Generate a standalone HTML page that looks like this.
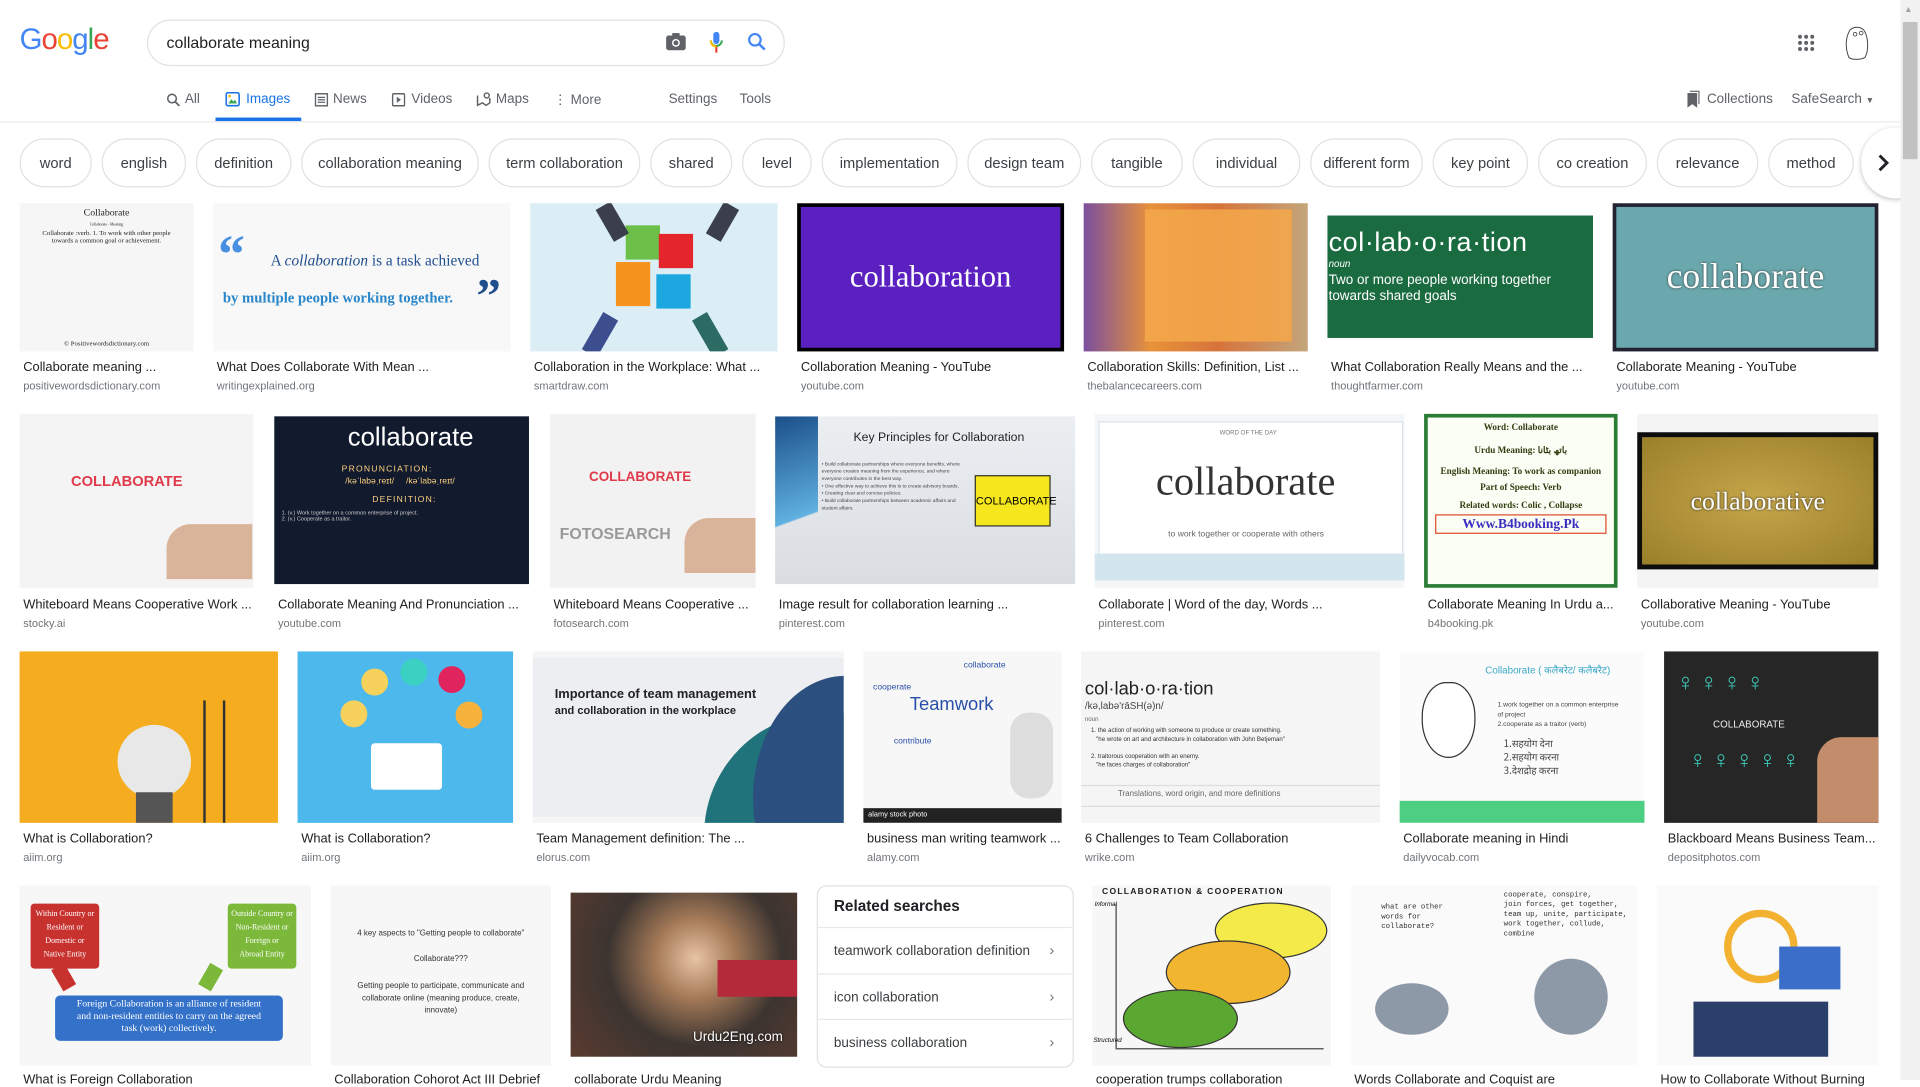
<!DOCTYPE html>
<html><head><meta charset="utf-8">
<style>
html,body{margin:0;padding:0;width:1920px;height:1080px;overflow:hidden;background:#fff;font-family:"Liberation Sans",Arial,sans-serif;}
#w{position:absolute;left:0;top:0;width:1568px;height:882px;transform:scale(1.22449);transform-origin:0 0;}
.a{position:absolute;}
.chip{position:absolute;top:113px;height:38px;border:1px solid #dfe1e5;border-radius:20px;font-size:12px;color:#3c4043;line-height:38px;text-align:center;box-sizing:content-box;}
.tab{position:absolute;top:75px;font-size:11px;color:#5f6368;}
.im{position:absolute;overflow:hidden;}
.cap{position:absolute;font-size:10.5px;color:#202124;white-space:nowrap;}
.src{position:absolute;font-size:9px;color:#70757a;white-space:nowrap;}
.ser{font-family:"Liberation Serif",serif;}
</style></head><body><div id="w">
<div class="a" style="left:16px;top:19px;font-size:24px;letter-spacing:-0.8px;font-family:'Liberation Sans',sans-serif"><span style="color:#4285f4">G</span><span style="color:#ea4335">o</span><span style="color:#fbbc05">o</span><span style="color:#4285f4">g</span><span style="color:#34a853">l</span><span style="color:#ea4335">e</span></div>
<div class="a" style="left:120px;top:16px;width:519px;height:36px;border:1px solid #dfe1e5;border-radius:20px;"></div>
<div class="a" style="left:136px;top:27px;font-size:13px;color:#222">collaborate meaning</div>
<svg class="a" style="left:543px;top:26px" width="18" height="16" viewBox="0 0 18 16"><rect x="1" y="3" width="16" height="12" rx="2" fill="#5f6368"/><rect x="6" y="1" width="6" height="3" fill="#5f6368"/><circle cx="9" cy="9" r="3.2" fill="#fff"/><circle cx="9" cy="9" r="2" fill="#5f6368"/></svg>
<svg class="a" style="left:579px;top:25px" width="12" height="19" viewBox="0 0 12 19"><rect x="3.5" y="1" width="5" height="10" rx="2.5" fill="#4285f4"/><path d="M1.5 8 a4.5 4.5 0 0 0 9 0" stroke="#34a853" stroke-width="1.6" fill="none"/><path d="M6 13 v5" stroke="#ea4335" stroke-width="1.8"/><path d="M6 13 a4.5 4.5 0 0 1 -4.5 -5" stroke="#fbbc05" stroke-width="1.6" fill="none"/></svg>
<svg class="a" style="left:610px;top:26px" width="16" height="16" viewBox="0 0 16 16"><circle cx="6.5" cy="6.5" r="4.7" stroke="#4285f4" stroke-width="1.8" fill="none"/><path d="M10 10 L14.5 14.5" stroke="#4285f4" stroke-width="2"/></svg>
<svg class="a" style="left:1468px;top:28px" width="14" height="14" viewBox="0 0 14 14" fill="#5f6368"><circle cx="2" cy="2" r="1.6"/><circle cx="7" cy="2" r="1.6"/><circle cx="12" cy="2" r="1.6"/><circle cx="2" cy="7" r="1.6"/><circle cx="7" cy="7" r="1.6"/><circle cx="12" cy="7" r="1.6"/><circle cx="2" cy="12" r="1.6"/><circle cx="7" cy="12" r="1.6"/><circle cx="12" cy="12" r="1.6"/></svg>
<svg class="a" style="left:1504px;top:20px" width="24" height="30" viewBox="0 0 24 30"><path d="M6 6 C8 1 17 1 19 6 C22 12 22 22 19 27 C15 29 9 29 6 27 C3 20 3 12 6 6Z" fill="#fff" stroke="#444" stroke-width="0.8"/><circle cx="11" cy="8" r="1.5" fill="none" stroke="#444" stroke-width="0.7"/><circle cx="16" cy="7" r="1.5" fill="none" stroke="#444" stroke-width="0.7"/></svg>
<svg class="a" style="left:136px;top:76px" width="11" height="11" viewBox="0 0 11 11"><circle cx="4.5" cy="4.5" r="3.5" stroke="#5f6368" stroke-width="1.3" fill="none"/><path d="M7 7 L10.5 10.5" stroke="#5f6368" stroke-width="1.4"/></svg>
<div class="tab" style="left:151px">All</div>
<svg class="a" style="left:184px;top:75px" width="12" height="12" viewBox="0 0 12 12"><rect x="0.7" y="0.7" width="10.6" height="10.6" rx="1.5" stroke="#1a73e8" stroke-width="1.3" fill="none"/><path d="M2.5 9.5 L5 6 L6.5 8 L8 6.5 L9.5 9.5Z" fill="#34a853"/><rect x="2.5" y="2.5" width="2" height="2" fill="#fbbc05"/></svg>
<div class="tab" style="left:201px;color:#1a73e8">Images</div>
<div class="a" style="left:176px;top:96px;width:70px;height:3px;background:#1a73e8"></div>
<svg class="a" style="left:257px;top:76px" width="11" height="11" viewBox="0 0 11 11"><rect x="0.6" y="0.6" width="9.8" height="9.8" stroke="#5f6368" stroke-width="1.2" fill="none"/><path d="M2.5 3.5h6M2.5 5.5h6M2.5 7.5h6" stroke="#5f6368" stroke-width="1"/></svg>
<div class="tab" style="left:272px">News</div>
<svg class="a" style="left:320px;top:76px" width="11" height="11" viewBox="0 0 11 11"><rect x="0.6" y="0.6" width="9.8" height="9.8" rx="1" stroke="#5f6368" stroke-width="1.2" fill="none"/><path d="M4 3 L7.5 5.5 L4 8Z" fill="#5f6368"/></svg>
<div class="tab" style="left:336px">Videos</div>
<svg class="a" style="left:389px;top:75px" width="12" height="12" viewBox="0 0 12 12"><path d="M1 3 V11 L5 9 L8 11 L11 9 V5" stroke="#5f6368" stroke-width="1.2" fill="none"/><circle cx="8.5" cy="3" r="2" stroke="#5f6368" stroke-width="1.2" fill="none"/></svg>
<div class="tab" style="left:405px">Maps</div>
<div class="tab" style="left:452px">&#8942; More</div>
<div class="tab" style="left:546px">Settings</div>
<div class="tab" style="left:604px">Tools</div>
<svg class="a" style="left:1378px;top:74px" width="10" height="14" viewBox="0 0 10 14"><path d="M2 0 H10 V11 H9 V1 H2Z M0 2 H8 V14 L4 11 L0 14Z" fill="#5f6368"/></svg>
<div class="tab" style="left:1394px">Collections</div>
<div class="tab" style="left:1463px">SafeSearch <span style="font-size:7px">&#9660;</span></div>
<div class="a" style="left:0;top:99px;width:1552px;height:1px;background:#ebebeb"></div>
<div class="a" style="left:1552px;top:0;width:16px;height:882px;background:#f1f1f1"></div>
<div class="a" style="left:1554px;top:18px;width:12px;height:112px;background:#c1c1c1"></div>
<div class="a" style="left:1555px;top:5px;font-size:7px;color:#a3a3a3">&#9650;</div>
<div class="chip" style="left:16px;width:57px">word</div>
<div class="chip" style="left:83px;width:67px">english</div>
<div class="chip" style="left:160px;width:76px">definition</div>
<div class="chip" style="left:246px;width:143px">collaboration meaning</div>
<div class="chip" style="left:399px;width:122px">term collaboration</div>
<div class="chip" style="left:531px;width:65px">shared</div>
<div class="chip" style="left:606px;width:55px">level</div>
<div class="chip" style="left:671px;width:109px">implementation</div>
<div class="chip" style="left:790px;width:91px">design team</div>
<div class="chip" style="left:891px;width:73px">tangible</div>
<div class="chip" style="left:974px;width:86px">individual</div>
<div class="chip" style="left:1070px;width:90px">different form</div>
<div class="chip" style="left:1170px;width:76px">key point</div>
<div class="chip" style="left:1256px;width:87px">co creation</div>
<div class="chip" style="left:1353px;width:81px">relevance</div>
<div class="chip" style="left:1444px;width:68px">method</div>
<div class="a" style="left:1520px;top:104px;width:56px;height:58px;border-radius:29px;background:#fff;box-shadow:0 1px 4px rgba(0,0,0,.25)"></div>
<svg class="a" style="left:1533px;top:125px" width="10" height="16" viewBox="0 0 10 16"><path d="M2 2 L8 8 L2 14" stroke="#202124" stroke-width="2.4" fill="none"/></svg>
<div class="a" style="left:1552px;top:100px;width:16px;height:70px;background:#f1f1f1"></div>
<div class="a" style="left:1554px;top:100px;width:12px;height:30px;background:#c1c1c1"></div>

<div class="im ser" style="left:16px;top:166px;width:142px;height:121px;background:#f6f6f6;text-align:center;color:#222">
 <div style="font-size:8px;margin-top:3px">Collaborate</div><div style="font-size:3px;margin-top:3px">Collaborate - Meaning</div>
 <div style="font-size:5.5px;margin-top:3px;line-height:6px">Collaborate :verb. 1. To work with other people<br>towards a common goal or achievement.</div>
 <div style="font-size:5.5px;position:absolute;bottom:3px;width:100%">© Positivewordsdictionary.com</div></div>
<div class="im ser" style="left:174px;top:166px;width:243px;height:121px;background:#f8f8f8">
 <div style="position:absolute;left:4px;top:16px;font-size:44px;color:#4a90e2;font-weight:bold">&#8220;</div>
 <div style="position:absolute;left:47px;top:40px;font-size:12.5px;color:#1f4e8c">A <i>collaboration</i> is a task achieved</div>
 <div style="position:absolute;left:8px;top:70px;font-size:12px;color:#2a86c8;font-weight:bold">by multiple people working together.</div>
 <div style="position:absolute;left:215px;top:52px;font-size:40px;color:#1f4e8c;font-weight:bold">&#8221;</div></div>
<div class="im" style="left:433px;top:166px;width:202px;height:121px;background:#dbeef6">
 <div class="a" style="left:78px;top:18px;width:28px;height:28px;background:#6cc04a"></div><div class="a" style="left:105px;top:25px;width:28px;height:28px;background:#e4262c"></div>
 <div class="a" style="left:70px;top:48px;width:28px;height:36px;background:#f6921e"></div><div class="a" style="left:103px;top:58px;width:28px;height:28px;background:#1ca7e0"></div>
 <div class="a" style="left:60px;top:0;width:14px;height:30px;background:#3a3f4b;transform:rotate(-30deg)"></div><div class="a" style="left:150px;top:0;width:14px;height:30px;background:#3a3f4b;transform:rotate(30deg)"></div>
 <div class="a" style="left:50px;top:90px;width:14px;height:35px;background:#3d4e8f;transform:rotate(30deg)"></div><div class="a" style="left:140px;top:90px;width:14px;height:35px;background:#2b6b64;transform:rotate(-30deg)"></div></div>
<div class="im" style="left:651px;top:166px;width:218px;height:121px;background:#000"><div class="a ser" style="left:3px;top:3px;width:212px;height:115px;background:#5a20c0;color:#fff;font-size:25px;text-align:center;line-height:115px">collaboration</div></div>
<div class="im" style="left:885px;top:166px;width:183px;height:121px;background:linear-gradient(90deg,#7b4f9e 0,#e8923a 30%,#d6733b 60%,#c3a57b 100%)"><div class="a" style="left:50px;top:5px;width:120px;height:108px;background:#f3a64a;opacity:.9"></div></div>
<div class="im" style="left:1084px;top:166px;width:217px;height:121px;background:#fff"><div class="a" style="left:0;top:10px;width:217px;height:100px;background:#1b6b40;color:#fff">
 <div style="font-size:22px;margin:9px 0 0 1px;letter-spacing:.5px">col·lab·o·ra·tion</div><div style="font-size:8px;font-style:italic;margin-left:1px">noun</div>
 <div style="font-size:11px;margin:3px 0 0 1px;line-height:13px">Two or more people working together<br>towards shared goals</div></div></div>
<div class="im" style="left:1317px;top:166px;width:217px;height:121px;background:#223"><div class="a ser" style="left:3px;top:3px;width:211px;height:115px;background:#6aa8ad;color:#fff;font-size:29px;text-align:center;line-height:115px;text-shadow:0 0 2px #333">collaborate</div></div>

<div class="cap" style="left:19px;top:294px">Collaborate meaning ...</div><div class="src" style="left:19px;top:310px">positivewordsdictionary.com</div>
<div class="cap" style="left:177px;top:294px">What Does Collaborate With Mean ...</div><div class="src" style="left:177px;top:310px">writingexplained.org</div>
<div class="cap" style="left:436px;top:294px">Collaboration in the Workplace: What ...</div><div class="src" style="left:436px;top:310px">smartdraw.com</div>
<div class="cap" style="left:654px;top:294px">Collaboration Meaning - YouTube</div><div class="src" style="left:654px;top:310px">youtube.com</div>
<div class="cap" style="left:888px;top:294px">Collaboration Skills: Definition, List ...</div><div class="src" style="left:888px;top:310px">thebalancecareers.com</div>
<div class="cap" style="left:1087px;top:294px">What Collaboration Really Means and the ...</div><div class="src" style="left:1087px;top:310px">thoughtfarmer.com</div>
<div class="cap" style="left:1320px;top:294px">Collaborate Meaning - YouTube</div><div class="src" style="left:1320px;top:310px">youtube.com</div>

<div class="im" style="left:16px;top:338px;width:191px;height:142px;background:#f4f4f4"><div class="a" style="left:42px;top:48px;font-size:12px;color:#e03a4a;font-weight:bold">COLLABORATE</div><div class="a" style="left:120px;top:90px;width:70px;height:45px;background:#d9b49a;border-radius:20px 0 0 0"></div></div>
<div class="im" style="left:224px;top:340px;width:208px;height:137px;background:#121a2e;color:#fff">
 <div class="a" style="left:60px;top:6px;font-size:21px">collaborate</div><div class="a" style="left:55px;top:40px;font-size:7px;letter-spacing:1px;color:#ffd27f">PRONUNCIATION:</div>
 <div class="a" style="left:58px;top:50px;font-size:7px;color:#ffd27f">/kəˈlabəˌreɪt/ &nbsp;&nbsp;&nbsp;&nbsp;/kəˈlabəˌreɪt/</div><div class="a" style="left:80px;top:65px;font-size:7px;letter-spacing:1px;color:#ffd27f">DEFINITION:</div>
 <div class="a" style="left:6px;top:76px;font-size:4.5px;color:#ccc;width:200px">1. (v.) Work together on a common enterprise of project.<br>2. (v.) Cooperate as a traitor.</div></div>
<div class="im" style="left:449px;top:338px;width:168px;height:142px;background:#f2f2f2"><div class="a" style="left:32px;top:46px;font-size:11px;color:#e03a4a;font-weight:bold">COLLABORATE</div><div class="a" style="left:8px;top:90px;font-size:13px;color:#999;font-weight:bold">FOTOSEARCH</div><div class="a" style="left:110px;top:85px;width:60px;height:45px;background:#d9b49a;border-radius:20px 0 0 0"></div></div>
<div class="im" style="left:633px;top:340px;width:245px;height:137px;background:linear-gradient(#eceff2,#d9dde2)">
 <div class="a" style="left:0;top:0;width:35px;height:137px;background:linear-gradient(160deg,#1b4f8a,#5fb0e0 60%,transparent 61%)"></div>
 <div class="a" style="left:64px;top:12px;font-size:10px;color:#222">Key Principles for Collaboration</div>
 <div class="a" style="left:38px;top:36px;font-size:4px;color:#444;width:120px;line-height:6px">• Build collaborate partnerships where everyone benefits, where everyone creates meaning from the experience, and where everyone contributes in the best way.<br>• One effective way to achieve this is to create advisory boards.<br>• Creating clear and concise policies.<br>• Build collaborate partnerships between academic affairs and student affairs.</div>
 <div class="a" style="left:163px;top:48px;width:60px;height:40px;background:#f5e61e;border:1px solid #333;font-size:9px;text-align:center;line-height:40px">COLLABORATE</div></div>
<div class="im" style="left:894px;top:338px;width:253px;height:142px;background:#f4f6f7"><div class="a" style="left:3px;top:6px;width:247px;height:108px;background:#fff;border:1px solid #d7e3ea"></div><div class="a" style="left:0;top:114px;width:253px;height:22px;background:#d3e6ee"></div>
 <div class="a" style="left:102px;top:13px;font-size:5px;color:#777">WORD OF THE DAY</div><div class="a ser" style="left:50px;top:38px;font-size:33px;color:#333">collaborate</div><div class="a" style="left:60px;top:95px;font-size:7px;color:#666">to work together or cooperate with others</div></div>
<div class="im ser" style="left:1163px;top:338px;width:158px;height:142px;background:#2b7d36"><div class="a" style="left:3px;top:3px;width:152px;height:136px;background:#fafef5;text-align:center;font-size:7.5px;font-weight:bold;color:#2f3e10;line-height:11px">
 <div style="margin-top:2px">Word: Collaborate</div><div style="margin-top:8px">Urdu Meaning: باتھ بٹانا</div><div style="margin-top:6px">English Meaning: To work as companion</div><div style="margin-top:2px">Part of Speech: Verb</div><div style="margin-top:4px">Related words: Colic , Collapse</div>
 <div style="margin:2px 6px 0;border:1.5px solid #e04b2a;color:#3a2ec0;font-size:11px;line-height:14px">Www.B4booking.Pk</div></div></div>
<div class="im" style="left:1337px;top:338px;width:197px;height:142px;background:#f4f4f4"><div class="a" style="left:0;top:15px;width:197px;height:112px;background:#0d0d0d"></div><div class="a ser" style="left:4px;top:19px;width:189px;height:104px;background:radial-gradient(#c6a64a,#9a7f2a);color:#fff;font-size:21px;text-align:center;line-height:104px;text-shadow:0 0 2px #222">collaborative</div></div>

<div class="cap" style="left:19px;top:488px">Whiteboard Means Cooperative Work ...</div><div class="src" style="left:19px;top:504px">stocky.ai</div>
<div class="cap" style="left:227px;top:488px">Collaborate Meaning And Pronunciation ...</div><div class="src" style="left:227px;top:504px">youtube.com</div>
<div class="cap" style="left:452px;top:488px">Whiteboard Means Cooperative ...</div><div class="src" style="left:452px;top:504px">fotosearch.com</div>
<div class="cap" style="left:636px;top:488px">Image result for collaboration learning ...</div><div class="src" style="left:636px;top:504px">pinterest.com</div>
<div class="cap" style="left:897px;top:488px">Collaborate | Word of the day, Words ...</div><div class="src" style="left:897px;top:504px">pinterest.com</div>
<div class="cap" style="left:1166px;top:488px">Collaborate Meaning In Urdu a...</div><div class="src" style="left:1166px;top:504px">b4booking.pk</div>
<div class="cap" style="left:1340px;top:488px">Collaborative Meaning - YouTube</div><div class="src" style="left:1340px;top:504px">youtube.com</div>

<div class="im" style="left:16px;top:532px;width:211px;height:140px;background:#f5ad1f"><div class="a" style="left:80px;top:60px;width:60px;height:60px;border-radius:50%;background:#e8e8e8"></div><div class="a" style="left:95px;top:115px;width:30px;height:25px;background:#555"></div><div class="a" style="left:150px;top:40px;width:14px;height:100px;border-left:2px solid #333;border-right:2px solid #333"></div></div>
<div class="im" style="left:243px;top:532px;width:176px;height:140px;background:#4db8ec"><div class="a" style="left:60px;top:75px;width:58px;height:38px;background:#fff;border-radius:3px"></div><div class="a" style="left:52px;top:14px;width:22px;height:22px;border-radius:50%;background:#f6d25c"></div><div class="a" style="left:84px;top:6px;width:22px;height:22px;border-radius:50%;background:#3ad0c2"></div><div class="a" style="left:115px;top:12px;width:22px;height:22px;border-radius:50%;background:#e0245e"></div><div class="a" style="left:129px;top:41px;width:22px;height:22px;border-radius:50%;background:#f6b23a"></div><div class="a" style="left:35px;top:40px;width:22px;height:22px;border-radius:50%;background:#f6d25c"></div></div>
<div class="im" style="left:435px;top:532px;width:254px;height:140px;background:#f5f5f5"><div class="a" style="left:0;top:5px;width:254px;height:130px;background:#eceef1"></div>
 <div class="a" style="left:140px;top:50px;width:200px;height:200px;border-radius:50%;background:#20737a"></div><div class="a" style="left:180px;top:20px;width:150px;height:200px;border-radius:50%;background:#2b4f7e"></div>
 <div class="a" style="left:18px;top:29px;font-size:10.5px;font-weight:bold;color:#222;line-height:13px">Importance of team management<br><span style="font-size:9px">and collaboration in the workplace</span></div></div>
<div class="im" style="left:705px;top:532px;width:162px;height:140px;background:#f7f7f7"><div class="a" style="left:0;top:128px;width:162px;height:12px;background:#222;color:#fff;font-size:6px;line-height:12px;padding-left:4px">alamy stock photo</div>
 <div class="a" style="left:38px;top:35px;font-size:15px;color:#2a4fa8">Teamwork</div><div class="a" style="left:8px;top:26px;font-size:7px;color:#2a4fa8">cooperate</div><div class="a" style="left:82px;top:8px;font-size:7px;color:#2a4fa8">collaborate</div><div class="a" style="left:25px;top:70px;font-size:7px;color:#2a4fa8">contribute</div><div class="a" style="left:120px;top:50px;width:35px;height:70px;background:#ddd;border-radius:15px"></div></div>
<div class="im" style="left:883px;top:532px;width:244px;height:140px;background:#f5f5f5">
 <div class="a" style="left:3px;top:22px;font-size:15px;color:#222">col·lab·o·ra·tion</div><div class="a" style="left:3px;top:40px;font-size:8px;color:#444">/kə,labə'rāSH(ə)n/</div><div class="a" style="left:3px;top:53px;font-size:5px;color:#666">noun</div>
 <div class="a" style="left:8px;top:62px;font-size:5px;color:#333;line-height:7px">1. the action of working with someone to produce or create something.<br>&nbsp;&nbsp;&nbsp;"he wrote on art and architecture in collaboration with John Betjeman"<br><br>2. traitorous cooperation with an enemy.<br>&nbsp;&nbsp;&nbsp;"he faces charges of collaboration"</div>
 <div class="a" style="left:0;top:109px;width:244px;height:1px;background:#ddd"></div><div class="a" style="left:30px;top:113px;font-size:6.5px;color:#666">Translations, word origin, and more definitions</div><div class="a" style="left:0;top:126px;width:244px;height:1px;background:#ddd"></div></div>
<div class="im" style="left:1143px;top:532px;width:200px;height:140px;background:#fbfbfb"><div class="a" style="left:0;top:122px;width:200px;height:18px;background:#4ccf82"></div><div class="a" style="left:70px;top:10px;font-size:8px;color:#3aa8c8;line-height:11px;width:120px">Collaborate ( कलैबरेट/ कलैबरैट)</div>
 <div class="a" style="left:80px;top:40px;font-size:5.5px;color:#444;line-height:8px">1.work together on a common enterprise<br>of project<br>2.cooperate as a traitor (verb)</div><div class="a" style="left:85px;top:70px;font-size:8px;color:#444;line-height:11px;font-family:'Noto Sans CJK SC',sans-serif">1.सहयोग देना<br>2.सहयोग करना<br>3.देशद्रोह करना</div>
 <div class="a" style="left:18px;top:25px;width:42px;height:60px;border:1.5px solid #333;border-radius:45% 45% 50% 50%;background:#fff"></div></div>
<div class="im" style="left:1359px;top:532px;width:175px;height:140px;background:#262626"><div class="a" style="left:40px;top:55px;font-size:8px;color:#eee">COLLABORATE</div><div class="a" style="left:10px;top:15px;font-size:20px;color:#3dc9b7;letter-spacing:4px">♀♀♀♀</div><div class="a" style="left:20px;top:78px;font-size:20px;color:#3dc9b7;letter-spacing:4px">♀♀♀♀♀</div><div class="a" style="left:125px;top:70px;width:55px;height:70px;background:#c38c6a;border-radius:20px 0 0 0"></div></div>

<div class="cap" style="left:19px;top:679px">What is Collaboration?</div><div class="src" style="left:19px;top:695px">aiim.org</div>
<div class="cap" style="left:246px;top:679px">What is Collaboration?</div><div class="src" style="left:246px;top:695px">aiim.org</div>
<div class="cap" style="left:438px;top:679px">Team Management definition: The ...</div><div class="src" style="left:438px;top:695px">elorus.com</div>
<div class="cap" style="left:708px;top:679px">business man writing teamwork ...</div><div class="src" style="left:708px;top:695px">alamy.com</div>
<div class="cap" style="left:886px;top:679px">6 Challenges to Team Collaboration</div><div class="src" style="left:886px;top:695px">wrike.com</div>
<div class="cap" style="left:1146px;top:679px">Collaborate meaning in Hindi</div><div class="src" style="left:1146px;top:695px">dailyvocab.com</div>
<div class="cap" style="left:1362px;top:679px">Blackboard Means Business Team...</div><div class="src" style="left:1362px;top:695px">depositphotos.com</div>

<div class="im ser" style="left:16px;top:723px;width:238px;height:147px;background:#f7f7f7">
 <div class="a" style="left:9px;top:15px;width:56px;height:50px;background:#c7322f;border-radius:3px;color:#fff;font-size:6.5px;text-align:center;line-height:11px;padding-top:3px">Within Country or<br>Resident or<br>Domestic or<br>Native Entity</div>
 <div class="a" style="left:30px;top:65px;width:12px;height:20px;background:#c7322f;transform:rotate(-30deg)"></div>
 <div class="a" style="left:170px;top:15px;width:56px;height:50px;background:#7cb83a;border-radius:3px;color:#fff;font-size:6.5px;text-align:center;line-height:11px;padding-top:3px">Outside Country or<br>Non-Resident or<br>Foreign or<br>Abroad Entity</div>
 <div class="a" style="left:150px;top:65px;width:12px;height:20px;background:#7cb83a;transform:rotate(30deg)"></div>
 <div class="a" style="left:29px;top:90px;width:186px;height:35px;background:#3472c9;border-radius:4px;color:#fff;font-size:8px;text-align:center;line-height:10px;padding-top:2px">Foreign Collaboration is an alliance of resident<br>and non-resident entities to carry on the agreed<br>task (work) collectively.</div></div>
<div class="im" style="left:270px;top:723px;width:180px;height:147px;background:#f7f7f7;text-align:center;font-size:6.5px;color:#333">
 <div style="margin-top:36px">4 key aspects to "Getting people to collaborate"</div><div style="margin-top:14px">Collaborate???</div><div style="margin-top:14px;line-height:10px">Getting people to participate, communicate and<br>collaborate online (meaning produce, create,<br>innovate)</div></div>
<div class="im" style="left:466px;top:729px;width:185px;height:134px;background:radial-gradient(circle at 55% 40%,#e8c4a4 0,#a57a58 25%,#3c3430 55%,#5a3b30 100%)"><div class="a" style="left:120px;top:55px;width:65px;height:30px;background:#b52a3a"></div><div class="a" style="left:100px;top:112px;font-size:11px;color:#fff;text-shadow:0 0 2px #000">Urdu2Eng.com</div></div>
<div class="a" style="left:667px;top:723px;width:208px;height:147px;border:1px solid #dfe1e5;border-radius:8px;background:#fff"></div>
<div class="a" style="left:681px;top:733px;font-size:12.5px;font-weight:bold;color:#202124">Related searches</div>
<div class="a" style="left:668px;top:757px;width:207px;height:1px;background:#e8e8e8"></div>
<div class="a" style="left:681px;top:771px;font-size:11px;color:#3c4043">teamwork collaboration definition</div><div class="a" style="left:857px;top:769px;font-size:12px;color:#70757a">›</div>
<div class="a" style="left:668px;top:795px;width:207px;height:1px;background:#e8e8e8"></div>
<div class="a" style="left:681px;top:809px;font-size:11px;color:#3c4043">icon collaboration</div><div class="a" style="left:857px;top:807px;font-size:12px;color:#70757a">›</div>
<div class="a" style="left:668px;top:832px;width:207px;height:1px;background:#e8e8e8"></div>
<div class="a" style="left:681px;top:846px;font-size:11px;color:#3c4043">business collaboration</div><div class="a" style="left:857px;top:844px;font-size:12px;color:#70757a">›</div>
<div class="im" style="left:892px;top:723px;width:195px;height:147px;background:#f7f7f7">
 <div class="a" style="left:8px;top:2px;font-size:7px;font-weight:bold;letter-spacing:1px;color:#222">COLLABORATION &amp; COOPERATION</div>
 <div class="a" style="left:19px;top:15px;width:1px;height:118px;background:#444"></div><div class="a" style="left:19px;top:133px;width:170px;height:1px;background:#444"></div>
 <div class="a" style="left:100px;top:14px;width:90px;height:44px;border-radius:50%;background:#f4ea4a;border:1px solid #333"></div>
 <div class="a" style="left:60px;top:45px;width:100px;height:50px;border-radius:50%;background:#f2b530;border:1px solid #333"></div>
 <div class="a" style="left:25px;top:85px;width:92px;height:46px;border-radius:50%;background:#5aa832;border:1px solid #333"></div>
 <div class="a" style="left:2px;top:13px;font-size:5px;font-style:italic">Informal</div><div class="a" style="left:1px;top:124px;font-size:5px;font-style:italic">Structured</div></div>
<div class="im" style="left:1103px;top:723px;width:234px;height:147px;background:#fafafa">
 <div class="a" style="left:125px;top:4px;font-size:6px;font-family:'Liberation Mono',monospace;color:#333;line-height:8px">cooperate, conspire,<br>join forces, get together,<br>team up, unite, participate,<br>work together, collude, combine</div>
 <div class="a" style="left:25px;top:14px;font-size:6px;font-family:'Liberation Mono',monospace;color:#333;line-height:8px">what are other<br>words for<br>collaborate?</div>
 <div class="a" style="left:20px;top:80px;width:60px;height:42px;border-radius:50%;background:#8e99a8"></div><div class="a" style="left:150px;top:60px;width:60px;height:62px;border-radius:50%;background:#8e99a8"></div></div>
<div class="im" style="left:1353px;top:723px;width:181px;height:147px;background:#fafafa"><div class="a" style="left:55px;top:20px;width:60px;height:60px;border-radius:50%;border:6px solid #f2b230;box-sizing:border-box"></div><div class="a" style="left:30px;top:95px;width:110px;height:45px;background:#2a3f6a"></div><div class="a" style="left:100px;top:50px;width:50px;height:35px;background:#3a6ec8"></div></div>

<div class="cap" style="left:19px;top:876px">What is Foreign Collaboration</div>
<div class="cap" style="left:273px;top:876px">Collaboration Cohorot Act III Debrief</div>
<div class="cap" style="left:469px;top:876px">collaborate Urdu Meaning</div>
<div class="cap" style="left:895px;top:876px">cooperation trumps collaboration</div>
<div class="cap" style="left:1106px;top:876px">Words Collaborate and Coquist are</div>
<div class="cap" style="left:1356px;top:876px">How to Collaborate Without Burning</div>
</div></body></html>
